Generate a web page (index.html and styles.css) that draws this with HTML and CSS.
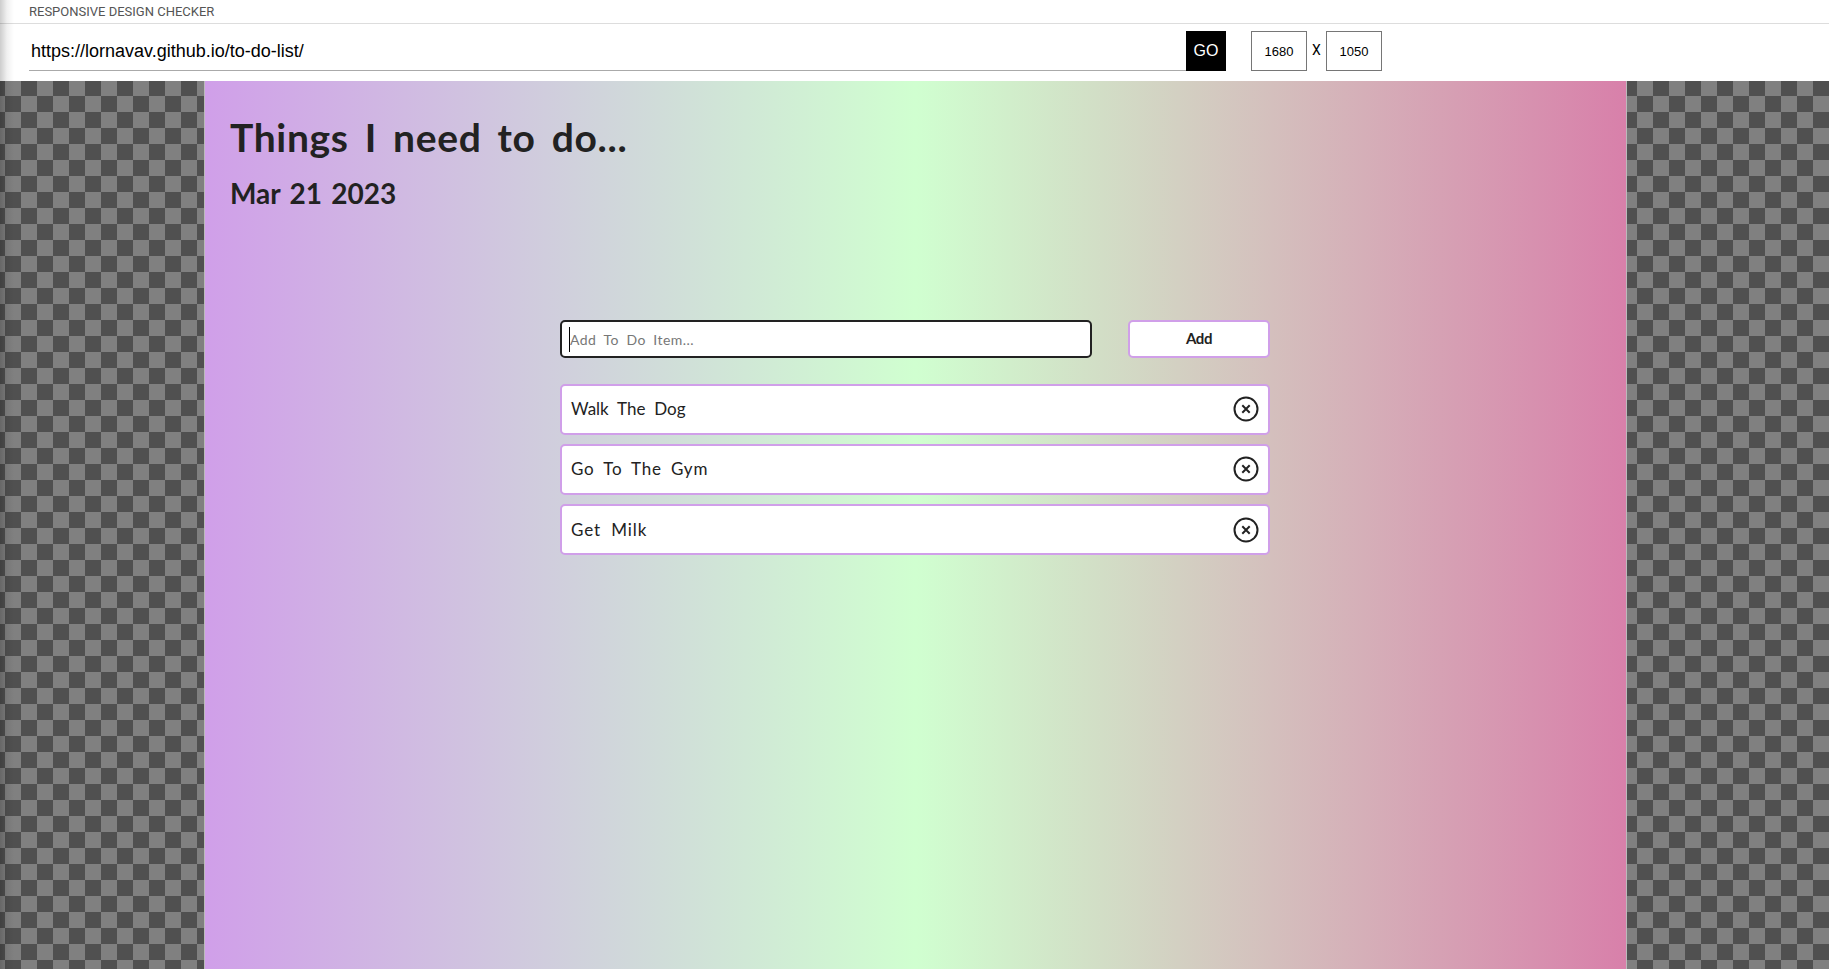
FILE: index.html
```html
<!DOCTYPE html>
<html lang="en">
<head>
<meta charset="utf-8">
<title>Responsive Design Checker</title>
<link rel="stylesheet" href="styles.css">
</head>
<body>
<header class="brand">RESPONSIVE DESIGN CHECKER</header>
<div class="toolbar">
  <div class="url">https://lornavav.github.io/to-do-list/</div>
  <div class="go">GO</div>
  <div class="dim">1680</div>
  <div class="times">X</div>
  <div class="dim">1050</div>
</div>
<main class="stage">
  <div class="frame">
    <h1 class="title"><span>Things I need to do...</span></h1>
    <h2 class="date"><span>Mar 21 2023</span></h2>
    <div class="todo">
      <div class="entry">
        <div class="field"><i class="caret"></i><span>Add To Do Item...</span></div>
        <div class="add"><span>Add</span></div>
      </div>
      <div class="item"><span class="walk">Walk The Dog</span><svg class="remove" viewBox="0 0 26 26"><circle cx="13" cy="13" r="11.5"/><path d="M9.3 9.3l7.4 7.4M16.7 9.3l-7.4 7.4"/></svg></div>
      <div class="item"><span class="gym">Go To The Gym</span><svg class="remove" viewBox="0 0 26 26"><circle cx="13" cy="13" r="11.5"/><path d="M9.3 9.3l7.4 7.4M16.7 9.3l-7.4 7.4"/></svg></div>
      <div class="item last"><span class="milk">Get Milk</span><svg class="remove" viewBox="0 0 26 26"><circle cx="13" cy="13" r="11.5"/><path d="M9.3 9.3l7.4 7.4M16.7 9.3l-7.4 7.4"/></svg></div>
    </div>
  </div>
</main>
<div class="edge"></div>
</body>
</html>
```
FILE: styles.css
```css
* { box-sizing: border-box; }
body { margin: 0; height: 969px; overflow: hidden; display: flex; flex-direction: column; background: #fff; font-family: "Liberation Sans", sans-serif; }
.brand { height: 24px; padding-left: 29px; border-bottom: 1px solid #ddd; font: 13px/24px Roboto, sans-serif; color: #555; }
.toolbar { height: 57px; padding: 7px 0 10px 29px; display: flex; color: #000; }
.url { width: 1157px; height: 40px; padding-left: 2px; border-bottom: 1px solid #aaa; font-size: 18px; line-height: 40px; }
.go { width: 40px; height: 40px; background: #000; color: #fff; font-size: 16px; line-height: 39px; text-align: center; margin-right: 25px; }
.dim { width: 56px; height: 40px; border: 1px solid #767676; font-size: 13px; line-height: 39px; text-align: center; }
.times { width: 19px; font: 14px/38px Roboto, sans-serif; text-align: center; }
.stage { flex: 1; padding-left: 204px; background: conic-gradient(#505050 25%, #808080 0 50%, #505050 0 75%, #808080 0) 5px -1px / 32px 32px; }
.frame { width: 1423px; height: 100%; border: solid #bbb; border-width: 0 1px; padding: 30px 25px 0; background: linear-gradient(90deg, #d09fe9, #d0ffd0 50%, #d880aa); font-family: Lato, sans-serif; color: #222; }
.title { margin: 0; height: 54px; font-size: 39px; line-height: 52px; letter-spacing: .65px; word-spacing: 6px; white-space: nowrap; }
.date { margin: 0; height: 56px; font-size: 28px; line-height: 56px; word-spacing: 2.5px; white-space: nowrap; }
.todo { width: 710px; margin: 99px 0 0 330px; }
.entry { display: flex; justify-content: space-between; height: 38px; margin-bottom: 26px; }
.field { display: flex; align-items: center; width: 532px; border: 2.5px solid #222; border-radius: 5px; background: #fff; padding-left: 7px; font-size: 14px; color: #777; letter-spacing: .45px; word-spacing: 3.5px; }
.caret { width: 1px; height: 25px; background: #000; }
.add { width: 142px; border: 2px solid #d09fe9; border-radius: 5px; background: #fff; font-size: 15px; letter-spacing: -.4px; font-weight: bold; line-height: 33px; text-align: center; }
.item { display: flex; align-items: center; justify-content: space-between; height: 51px; margin-bottom: 9px; padding: 0 9px 2px; border: 2px solid #d09fe9; border-radius: 5px; background: #fff; font-size: 17px; }
.last { padding-bottom: 0; }
.walk { word-spacing: 4.5px; }
.gym { letter-spacing: .8px; word-spacing: 4px; }
.milk { letter-spacing: .9px; word-spacing: 5px; }
.remove { width: 26px; height: 26px; fill: none; stroke: #222; stroke-width: 2; }
.edge { position: absolute; left: 0; top: 0; width: 14px; height: 969px; background: linear-gradient(90deg, rgba(0,0,0,.2), rgba(0,0,0,.06) 50%, transparent); }
```
